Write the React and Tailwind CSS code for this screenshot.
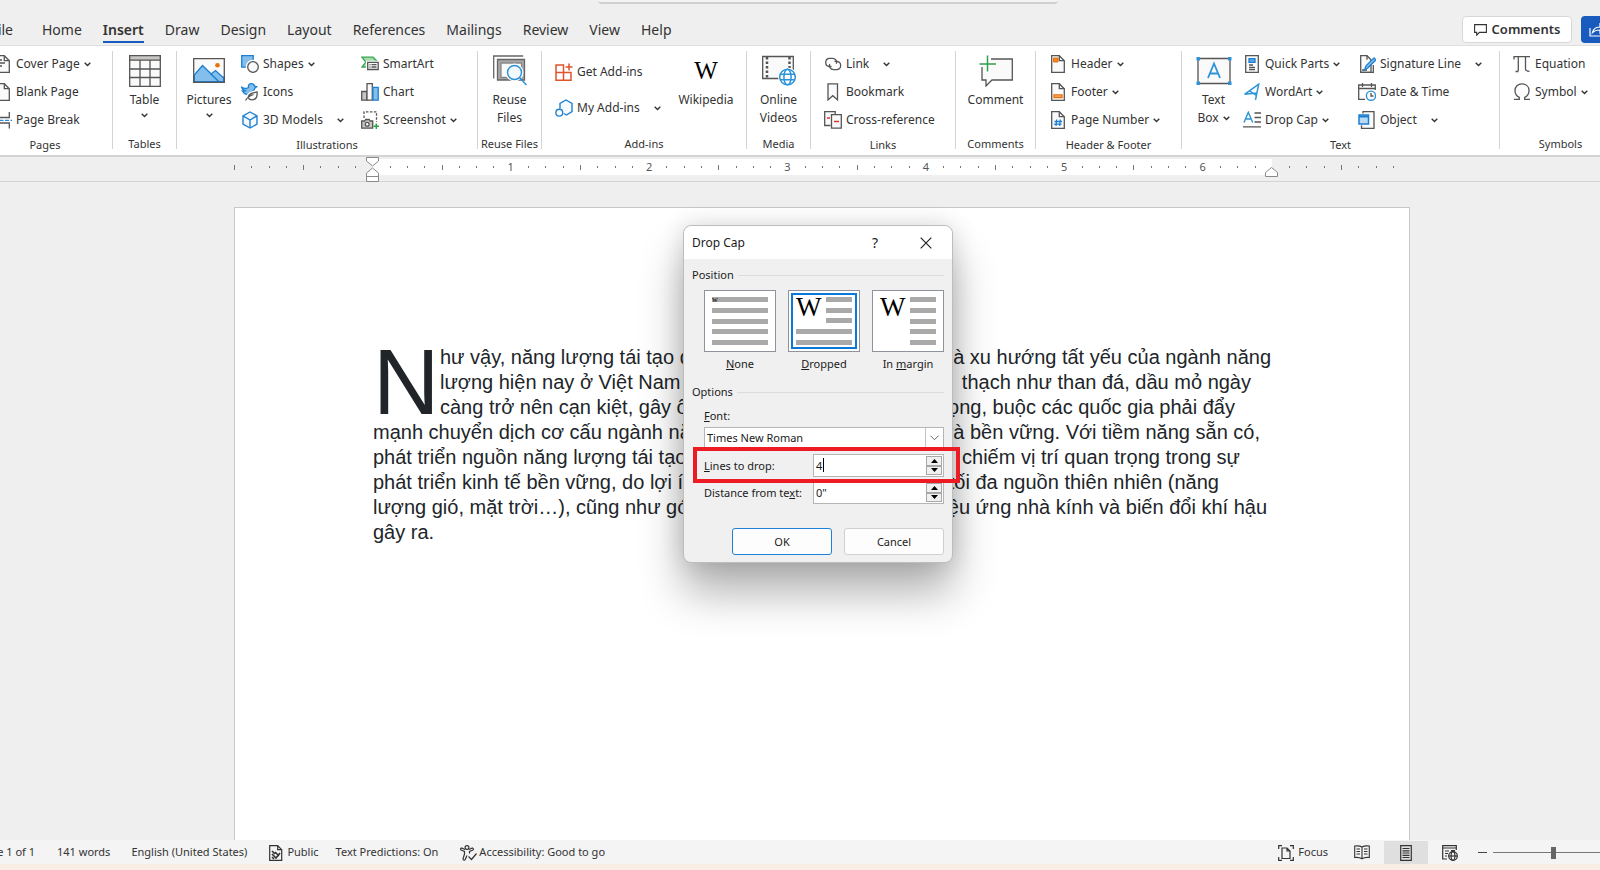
import React, { useState } from "react";

const tabs = [
  "Home",
  "Insert",
  "Draw",
  "Design",
  "Layout",
  "References",
  "Mailings",
  "Review",
  "View",
  "Help",
];

// Document lines: the middle of each one lies under the dialog
const lines = [
  { left: "hư vậy, năng lượng tái tạo đ", right: "là xu hướng tất yếu của ngành năng", width: 831 },
  { left: "lượng hiện nay ở Việt Nam", right: "thạch như than đá, dầu mỏ ngày", width: 811 },
  { left: "càng trở nên cạn kiệt, gây ô", right: "rọng, buộc các quốc gia phải đẩy", width: 795 },
  { left: "mạnh chuyển dịch cơ cấu ngành nă", right: "và bền vững. Với tiềm năng sẵn có,", width: 887 },
  { left: "phát triển nguồn năng lượng tái tạo", right: "chiếm vị trí quan trọng trong sự", width: 867 },
  { left: "phát triển kinh tế bền vững, do lợi íc", right: "tối đa nguồn thiên nhiên (năng", width: 846 },
  { left: "lượng gió, mặt trời…), cũng như gó", right: "iệu ứng nhà kính và biến đổi khí hậu", width: 894 },
  { left: "gây ra.", right: "", width: 894 },
];

const Chevron = ({ className = "" }) => (
  <svg className={"h-[5px] w-[7px] shrink-0 " + className} viewBox="0 0 7 5" fill="none" stroke="#333" strokeWidth="1.400">
    <path d="M0.700 0.800 3.500 3.600 6.300 0.800" />
  </svg>
);

const Icon = ({ children }) => (
  <svg className="size-[18px] shrink-0" viewBox="0 0 18 18" fill="none" stroke="#555" strokeWidth="1.300">
    {children}
  </svg>
);

const PageShape = () => (
  <>
    <path d="M2.700 0.700h7.600l5 5v11.600H2.700z" fill="#fafafa" />
    <path d="M10.300 0.700v5h5" />
  </>
);

const icons = {
  cover: (
    <Icon>
      <PageShape />
      <path d="M4 5h4M4 8h7M4 11h4" />
    </Icon>
  ),
  blank: (
    <Icon>
      <PageShape />
    </Icon>
  ),
  pageBreak: (
    <Icon>
      <path d="M2 6.500h13.300V1M2 12h13.300v5.500" />
      <path d="M0 9.300h18" stroke="#2b88d8" strokeDasharray="4 1.500" />
    </Icon>
  ),
  shapes: (
    <Icon>
      <path d="M0.700 0.700h11.500v11.500H0.700z" fill="#83beec" stroke="#1e7fd0" />
      <circle cx="12" cy="12" r="6.600" fill="#fff" stroke="#fff" />
      <circle cx="12" cy="12" r="5.300" fill="#fafafa" />
    </Icon>
  ),
  icons: (
    <Icon>
      <path
        d="M0.700 4.200c2 1.300 5 1.500 6.800 0.300C7 2 8.500 0.700 10.300 0.700c1.800 0 2.900 1 3.200 2.300l2.200 0.700-2 1.500c-0.300 2.500-2.500 4-5 4.500-2 3-5.500 1.500-7.200-1.500 1 0.300 2 0.200 2.800-0.200C2.300 7.500 1 6 0.700 4.200z"
        fill="#83beec"
        stroke="#1e7fd0"
      />
      <path
        d="M16.300 8.500c0.500 4.500-0.500 8.500-5 8.700-3 0-4.500-1.500-4.300-3.500 0.300-3.500 4-4 9.300-5.200z"
        fill="#fff"
        stroke="#fff"
        strokeWidth="3"
      />
      <path d="M16 8.800c0.500 4.200-0.500 7.900-4.800 8.100-2.500 0-4-1.500-3.800-3.300 0.300-3.200 4-3.600 8.600-4.800zM4.500 17.500c2-3.500 4.500-5 8-6" fill="#fff" />
    </Icon>
  ),
  cube: (
    <Icon>
      <path d="M9 1 16 4.800v8.400L9 17 2 13.200V4.800z" fill="#f4f9fd" stroke="#2180cf" strokeWidth="1.400" />
      <path d="M2 4.800 9 9l7-4.200M9 9v8" stroke="#2180cf" strokeWidth="1.400" />
    </Icon>
  ),
  smartArt: (
    <Icon>
      <path d="M1 2.200h11l4.500 4.500H9V12H1l3.800-4.800z" fill="#a5dcae" stroke="#3ba554" />
      <path d="M5.500 6.500H17.500V15.500H5.500z" fill="#fff" stroke="#fff" />
      <path d="M6.700 7.300h10.500v7.200H6.700z" fill="#fafafa" />
      <path d="M8.500 9.600h1M10.500 9.600h5M8.500 12h1M10.500 12h5" />
    </Icon>
  ),
  chart: (
    <Icon>
      <path d="M0.700 8.500h5.300v8.700H0.700z" fill="#c8c6c4" />
      <path d="M6 0.700h5.300v16.500H6z" fill="#fafafa" />
      <path d="M11.900 4.300h5.300v12.900h-5.300z" fill="#83beec" stroke="#1e7fd0" />
    </Icon>
  ),
  screenshot: (
    <Icon>
      <path d="M3 7V0.900h12.500V11" strokeDasharray="2.500 1.500" />
      <path d="M0.700 10h3l1-1.500h3.500l1 1.500h2.500v7.200H0.700z" fill="#c8c6c4" />
      <circle cx="6.200" cy="13.300" r="1.900" fill="#fff" />
      <path d="M12.500 15.200h5.500M15.300 12.500V18" stroke="#2f9e48" strokeWidth="1.500" />
    </Icon>
  ),
  getAddins: (
    <Icon>
      <path d="M1 2h7.500v7.500H1zM1 9.500h7.500v7.800H1zM8.500 9.500H16v7.800H8.500z" stroke="#e0532b" strokeWidth="1.500" />
      <path d="M14 0.500v7M10.500 4h7" stroke="#e0532b" strokeWidth="1.500" />
    </Icon>
  ),
  myAddins: (
    <Icon>
      <path d="M5 9.500V4.500L11 1l6 3.500v8L11.500 16 8.700 14.500" fill="#f7fafd" stroke="#2180cf" strokeWidth="1.400" />
      <circle cx="4.300" cy="13.700" r="3.400" fill="#fff" stroke="#2180cf" strokeWidth="1.400" />
    </Icon>
  ),
  link: (
    <Icon>
      <path d="M7.500 11.500H5A4.200 4.200 0 0 1 5 3.300h3.500a4.100 4.100 0 0 1 3.900 5.400" />
      <path d="M10.500 6.300h2.600a4.200 4.200 0 0 1 0 8.300H9.600a4.100 4.100 0 0 1-3.900-5.600" />
    </Icon>
  ),
  bookmark: (
    <Icon>
      <path d="M4 0.900h9.500v16l-4.700-4.200L4 16.900z" fill="#fafafa" />
    </Icon>
  ),
  crossRef: (
    <Icon>
      <path d="M6.500 14.500H0.700V0.700h10.500V3" fill="#fafafa" />
      <path d="M7.500 3.700h9.800v13.500H7.500z" fill="#fafafa" />
      <path d="M3 7h3M10 10.500h5" stroke="#e0342b" />
    </Icon>
  ),
  header: (
    <Icon>
      <PageShape />
      <path d="M4.500 3h4.500v4H4.500z" fill="#f28a1e" stroke="#e8710a" strokeWidth="1" />
    </Icon>
  ),
  footer: (
    <Icon>
      <PageShape />
      <path d="M5 11.800h8v2.700H5z" fill="#fbb86c" stroke="#e8710a" />
    </Icon>
  ),
  pageNumber: (
    <Icon>
      <PageShape />
      <path d="M7.700 8.500 7 15M11.300 8.500l-0.700 6.500M5.500 10.500h7.500M5 13.200h7.500" stroke="#1e7fd0" />
    </Icon>
  ),
  quickParts: (
    <Icon>
      <path d="M2.700 0.700h12.600v16.600H2.700z" fill="#fafafa" />
      <path d="M6 3.700h6v3.600H6z" fill="#5aa9e6" stroke="#1e7fd0" />
      <path d="M6 10h4M6 12.300h6M6 14.500h6" />
    </Icon>
  ),
  wordArt: (
    <Icon>
      <path d="M1.500 11.300 15.700 1.200 12.500 16.800M1.500 11.300l12.300-1.200M6.500 7.800l6.800 4.700" stroke="#2b93d8" strokeWidth="1.500" />
    </Icon>
  ),
  dropCap: (
    <Icon>
      <path d="M1 11.500 5.300 1.300 9.700 11.500M2.500 8h5.700" stroke="#2b93d8" strokeWidth="1.400" />
      <path d="M11.500 2H18M11.500 6.500H18M11.500 11H18M0 15.800h18" />
    </Icon>
  ),
  signature: (
    <Icon>
      <path d="M2.700 0.700H9l4 4v12.600H2.700z" fill="#fafafa" />
      <path d="M9 0.700v4M4 15h5M15.300 10v7.300H2.700" />
      <path d="M6.500 15l1.500-4.200 8-8 2 2-8 8z" fill="#83beec" stroke="#1e7fd0" />
    </Icon>
  ),
  dateTime: (
    <Icon>
      <path d="M7 16.300H0.700V2h16.600v5M0.700 5.500h16.600M4.500 0v4M13.500 0v4" />
      <circle cx="13" cy="12.700" r="4.600" fill="#fff" stroke="#2b93d8" strokeWidth="1.400" />
      <path d="M13 10v3h2.500" />
    </Icon>
  ),
  object: (
    <Icon>
      <path d="M5 2.500V0.700h11v16.600H3.500v-3" fill="#fafafa" />
      <path d="M1 4h9.500v9H1z" fill="#b8daf5" stroke="#1e7fd0" strokeWidth="1.500" />
      <path d="M1 5.500h9.500" stroke="#1e7fd0" strokeWidth="2" />
    </Icon>
  ),
  pi: (
    <Icon>
      <path d="M1 4.500V1.600h16M5.300 1.600v14.500M2.500 16.500h3M12.500 1.600v12.200c0 2 1.500 2.500 4 2.500" />
    </Icon>
  ),
  omega: (
    <Icon>
      <path d="M1 16.400h5.300v-2C3.500 13 2 10.500 2 7.500 2 3.500 5 0.900 9 0.900s7 2.600 7 6.600c0 3-1.500 5.500-4.300 6.900v2H17" />
    </Icon>
  ),
};

const Item = ({ icon, label, arrow, split }) => (
  <button className="flex items-center whitespace-nowrap text-left">
    {icons[icon]}
    <span className="ml-1">{label}</span>
    {arrow && <Chevron className="ml-1" />}
    {split && <Chevron className="ml-3.5" />}
  </button>
);

const Column = ({ className = "", children }) => (
  <div className={"grid auto-rows-[28px] content-start " + className}>{children}</div>
);

const BigButton = ({ className = "", icon, children }) => (
  <button className={"flex flex-col items-center leading-[18px] " + className}>
    <span className="flex h-[41px] items-center">{icon}</span>
    {children}
  </button>
);

const Group = ({ title, className = "", children }) => (
  <section className={"flex shrink-0 " + className}>
    <div className="flex min-w-0 flex-1 flex-col pt-1">
      <div className="flex h-[84px]">{children}</div>
      <h2 className="text-center text-[11px] leading-[22px]">{title}</h2>
    </div>
    <div className="mt-[5px] h-[98px] w-px bg-[#d4d4d4]" />
  </section>
);

const TableIcon = () => (
  <svg width="32" height="32" viewBox="0 0 32 32" fill="#fafafa" stroke="#555" strokeWidth="1.300">
    <path d="M0.700 0.700h30.600v30.600H0.700z" />
    <path d="M0.700 0.700h30.600v4.500H0.700z" fill="#c8c6c4" />
    <path d="M0.700 14h30.600M0.700 22.500h30.600M11 5v26M21 5v26" />
  </svg>
);

const PictureIcon = () => (
  <svg width="32" height="25" viewBox="0 0 32 25" fill="#fafafa" strokeWidth="1.300">
    <path d="M0.700 0.700h30.600v23.600H0.700z" stroke="#555" />
    <path d="M1.300 17 9.500 7.500 26 23.700H1.300z" fill="#83beec" stroke="#1e7fd0" />
    <path d="M18 16l4.500-3.500 8.200 7.500v3.700H26z" fill="#83beec" stroke="#1e7fd0" />
    <path d="M0.700 17v7.300h30.600V18" fill="none" stroke="#555" />
    <circle cx="24.500" cy="7.200" r="2.300" fill="#e8710a" />
  </svg>
);

const ReuseIcon = () => (
  <svg width="34" height="31" viewBox="0 0 34 31" fill="none" stroke="#666" strokeWidth="1.300">
    <path d="M0.700 23.500V1h29.500" />
    <path d="M4.500 25V4.500h27v20.500z" fill="#a8a8a8" />
    <path d="M8 8h20.500v14.500H8z" fill="#fafafa" stroke="#888" />
    <circle cx="21.500" cy="17.500" r="8.300" fill="#fff" stroke="#fff" />
    <circle cx="21.500" cy="17.500" r="7" fill="#f4f9fd" stroke="#2b93d8" strokeWidth="1.500" />
    <path d="M26.500 22.500l7 7.500" stroke="#2b93d8" strokeWidth="1.500" />
  </svg>
);

const VideoIcon = () => (
  <svg width="34" height="31" viewBox="0 0 34 31" fill="none" stroke="#555" strokeWidth="1.300">
    <path d="M0.700 1.500h30.600v22H0.700z" fill="#fafafa" />
    <path d="M5 2v21M27.500 2v21" strokeWidth="2.500" strokeDasharray="2.500 2" />
    <circle cx="25.500" cy="22" r="9.500" fill="#fff" stroke="none" />
    <g stroke="#2b93d8" strokeWidth="1.500">
      <circle cx="25.500" cy="22" r="7.800" />
      <ellipse cx="25.500" cy="22" rx="3.600" ry="7.800" />
      <path d="M18.300 19.300h14.400M18.300 24.700h14.400" />
    </g>
  </svg>
);

const CommentIcon = () => (
  <svg width="34" height="32" viewBox="0 0 34 32" fill="none" stroke="#555" strokeWidth="1.300">
    <path d="M3 12v13h4v6l6-6h20.300V4H12" fill="#fafafa" />
    <path d="M8.500 0.500v16M0.500 9h16.500" stroke="#fff" strokeWidth="4" />
    <path d="M8.500 0.500v16M0.500 9h16.500" stroke="#2f9e48" strokeWidth="1.500" />
  </svg>
);

const TextBoxIcon = () => (
  <svg width="36" height="30" viewBox="0 0 36 30" fill="none" stroke="#555" strokeWidth="1.300">
    <path d="M2 2.500h32v25H2z" fill="#fafafa" />
    <path d="M12 22 18 7.500 24 22M14 17.500h8" stroke="#2b93d8" strokeWidth="1.800" />
    <path d="M0.500 1h3.500v3.500H0.500zM32 1h3.500v3.500H32zM0.500 25.500h3.500V29H0.500zM32 25.500h3.500V29H32z" fill="#2b93d8" stroke="none" />
  </svg>
);

const Ribbon = () => (
  <div className="flex h-[110px] overflow-hidden border-t border-[#dfdfdf] bg-white text-[12px] shadow-[0_2px_0_#d2d4d3]">
    <Group title="Pages" className="-ml-[22px] w-[135px]">
      <Column className="pl-4">
        <Item icon="cover" label="Cover Page" arrow />
        <Item icon="blank" label="Blank Page" />
        <Item icon="pageBreak" label="Page Break" />
      </Column>
    </Group>
    <Group title="Tables" className="w-[64px]">
      <BigButton className="w-full" icon={<TableIcon />}>
        <span>Table</span>
        <Chevron className="mt-1" />
      </BigButton>
    </Group>
    <Group title="Illustrations" className="w-[301px]">
      <BigButton className="w-[64px]" icon={<PictureIcon />}>
        <span>Pictures</span>
        <Chevron className="mt-1" />
      </BigButton>
      <Column className="w-[120px]">
        <Item icon="shapes" label="Shapes" arrow />
        <Item icon="icons" label="Icons" />
        <Item icon="cube" label="3D Models" split />
      </Column>
      <Column>
        <Item icon="smartArt" label="SmartArt" />
        <Item icon="chart" label="Chart" />
        <Item icon="screenshot" label="Screenshot" arrow />
      </Column>
    </Group>
    <Group title="Reuse Files" className="w-[64px] whitespace-nowrap">
      <BigButton className="w-full" icon={<ReuseIcon />}>
        <span>Reuse</span>
        <span>Files</span>
      </BigButton>
    </Group>
    <Group title="Add-ins" className="w-[205px]">
      <div className="grid w-[133px] auto-rows-[36px] content-start pt-1 pl-[13px]">
        <Item icon="getAddins" label="Get Add-ins" />
        <Item icon="myAddins" label="My Add-ins" split />
      </div>
      <BigButton
        className="w-[62px]"
        icon={<span className="font-['Liberation_Serif',serif] text-[25px] text-black">W</span>}
      >
        <span>Wikipedia</span>
      </BigButton>
    </Group>
    <Group title="Media" className="w-[64px]">
      <BigButton className="w-full" icon={<VideoIcon />}>
        <span>Online</span>
        <span>Videos</span>
      </BigButton>
    </Group>
    <Group title="Links" className="w-[145px]">
      <Column className="pl-[13px]">
        <Item icon="link" label="Link" split />
        <Item icon="bookmark" label="Bookmark" />
        <Item icon="crossRef" label="Cross-reference" />
      </Column>
    </Group>
    <Group title="Comments" className="w-[80px]">
      <BigButton className="w-full" icon={<CommentIcon />}>
        <span>Comment</span>
      </BigButton>
    </Group>
    <Group title="Header & Footer" className="w-[146px]">
      <Column className="pl-[13px]">
        <Item icon="header" label="Header" arrow />
        <Item icon="footer" label="Footer" arrow />
        <Item icon="pageNumber" label="Page Number" arrow />
      </Column>
    </Group>
    <Group title="Text" className="w-[318px]">
      <BigButton className="w-[61px] pl-0.5" icon={<TextBoxIcon />}>
        <span>Text</span>
        <span className="flex items-center">
          Box <Chevron className="ml-1" />
        </span>
      </BigButton>
      <Column className="w-[115px]">
        <Item icon="quickParts" label="Quick Parts" arrow />
        <Item icon="wordArt" label="WordArt" arrow />
        <Item icon="dropCap" label="Drop Cap" arrow />
      </Column>
      <Column>
        <Item icon="signature" label="Signature Line" split />
        <Item icon="dateTime" label="Date & Time" />
        <Item icon="object" label="Object" split />
      </Column>
    </Group>
    <Group title="Symbols" className="w-[122px]">
      <Column className="pl-[13px]">
        <Item icon="pi" label="Equation" />
        <Item icon="omega" label="Symbol" arrow />
      </Column>
    </Group>
  </div>
);

const Ruler = () => {
  // One cell for each eighth of an inch, the text area runs from 0 to 6.5"
  const cells = Array.from({ length: 68 }, (_, i) => i - 8);
  return (
    <div className="h-[27px] border-b border-[#d2d4d3] pt-1 pl-[234px]">
      <div className="relative flex h-4 w-[1176px] text-[11px] text-[#555]">
        {cells.map((n) => (
          <div
            key={n}
            className={"flex flex-1 items-center " + (n >= 0 && n < 52 ? "bg-white" : "")}
          >
            {n > 0 && n < 52 && n % 8 === 0 ? (
              <span className="flex w-0 justify-center">{n / 8}</span>
            ) : n === 0 || n === 52 ? null : (
              <span className={"w-px bg-[#777] " + (n % 4 === 0 ? "h-[5px]" : "h-[2px]")} />
            )}
          </div>
        ))}
        <svg className="absolute -top-0.5 left-[132px]" width="14" height="26" viewBox="0 0 14 26" fill="#fff" stroke="#8a8a8a">
          <path d="M0.500 0.500h12v3.500L6.500 9 0.500 4z" />
          <path d="M0.500 24.500V16l6-5 6 5v8.500zM0.500 19.500h12" />
        </svg>
        <svg className="absolute top-2 left-[1031px]" width="14" height="10" viewBox="0 0 14 10" fill="#fff" stroke="#8a8a8a">
          <path d="M0.500 9.500V5.500l6-5 6 5v4z" />
        </svg>
      </div>
    </div>
  );
};

const Bars = ({ count = 5, className = "" }) => (
  <span className={"flex flex-1 flex-col justify-between " + className}>
    {Array.from({ length: count }, (_, b) => (
      <span key={b} className="h-[5px] bg-[#a9a9a9]" />
    ))}
  </span>
);

const PositionOption = ({ id, label, checked, onChange, children }) => (
  <label className="flex flex-col items-center gap-1">
    <input type="radio" name="position" value={id} checked={checked} onChange={onChange} className="sr-only" />
    <span className="flex h-[62px] w-[72px] border border-[#8f939e] bg-white p-[2px]">
      <span className={"flex flex-1 border-2 px-[3px] pt-[2px] " + (checked ? "border-[#0a78d7]" : "border-transparent")}>
        {children}
      </span>
    </span>
    <span className="text-[11px] leading-[16px]">{label}</span>
  </label>
);

const BigW = () => (
  <span className="-mt-[3px] h-[26px] w-[30px] font-['Liberation_Serif',serif] text-[27px] leading-[26px] text-black">W</span>
);

const SectionTitle = ({ children }) => (
  <h3 className="flex items-center gap-1 text-[11px] leading-[16px]">
    {children}
    <span className="h-px flex-1 bg-[#dcdcdc]" />
  </h3>
);

const Spinner = ({ id, value, onChange, caret }) => (
  <div className="relative flex h-[23px] w-[131px] border border-[#b5b5b5] bg-white">
    <input
      id={id}
      type="text"
      className="min-w-0 flex-1 px-[2px] text-[11px] outline-none"
      value={value}
      onChange={(e) => onChange(e.target.value)}
    />
    {caret && <span className="absolute top-[3px] left-[9px] h-[14px] w-px bg-black" />}
    <div className="flex w-[18px] flex-col p-px">
      <button aria-label="Increase" className="flex flex-1 items-center justify-center border border-[#a8a8a8] bg-[#f0f0f0]">
        <svg width="7" height="4" viewBox="0 0 7 4">
          <path d="M0 4 3.500 0 7 4z" />
        </svg>
      </button>
      <button aria-label="Decrease" className="flex flex-1 items-center justify-center border border-[#a8a8a8] bg-[#f0f0f0]">
        <svg width="7" height="4" viewBox="0 0 7 4">
          <path d="M0 0 3.500 4 7 0z" />
        </svg>
      </button>
    </div>
  </div>
);

const DropCapDialog = () => {
  const [position, setPosition] = useState("dropped");
  const [font, setFont] = useState("Times New Roman");
  const [count, setCount] = useState("4");
  const [distance, setDistance] = useState('0"');

  return (
    <div
      role="dialog"
      aria-label="Drop Cap"
      className="absolute top-[225px] left-[683px] w-[270px] rounded-lg border border-[#bdbdbd] bg-[#f0f0f0] text-[11px] leading-[16px] text-[#1b1b1b] shadow-[0_30px_44px_0_rgba(0,0,0,0.3),0_0_24px_rgba(0,0,0,0.14)]"
    >
      <div className="flex h-[33px] items-center rounded-t-lg bg-white pl-2 text-[12px]">
        <span className="flex-1">Drop Cap</span>
        <button className="w-[50px] text-center text-[14px]">?</button>
        <button aria-label="Close" className="flex w-[52px] justify-center">
          <svg width="12" height="12" viewBox="0 0 12 12" fill="none" stroke="#222" strokeWidth="1.200">
            <path d="M0.700 0.700l10.600 10.600M11.300 0.700 0.700 11.300" />
          </svg>
        </button>
      </div>

      <div className="px-2 pt-2 pb-[7px]">
        <SectionTitle>Position</SectionTitle>
        <div className="mt-[7px] flex justify-between pl-3">
          <PositionOption
            id="none"
            checked={position === "none"}
            onChange={() => setPosition("none")}
            label={<><u>N</u>one</>}
          >
            <span className="relative w-0 font-['Liberation_Serif',serif] text-[8px] leading-[5px] text-black">w</span>
            <Bars className="h-12" />
          </PositionOption>
          <PositionOption
            id="dropped"
            checked={position === "dropped"}
            onChange={() => setPosition("dropped")}
            label={<><u>D</u>ropped</>}
          >
            <span className="flex flex-1 flex-col gap-[6px]">
              <span className="flex h-[26px]">
                <BigW />
                <Bars count={3} />
              </span>
              <span className="h-[5px] bg-[#a9a9a9]" />
              <span className="h-[5px] bg-[#a9a9a9]" />
            </span>
          </PositionOption>
          <PositionOption
            id="margin"
            checked={position === "margin"}
            onChange={() => setPosition("margin")}
            label={<>In <u>m</u>argin</>}
          >
            <BigW />
            <Bars className="h-12" />
          </PositionOption>
        </div>

        <div className="mt-3">
          <SectionTitle>Options</SectionTitle>
        </div>
        <div className="pl-3">
          <label htmlFor="font" className="mt-2 block">
            <u>F</u>ont:
          </label>
          <div className="relative mt-[3px]">
            <select
              id="font"
              value={font}
              onChange={(e) => setFont(e.target.value)}
              className="block h-[22px] w-full appearance-none border border-[#b5b5b5] bg-white pl-[2px] outline-none"
            >
              <option>Times New Roman</option>
              <option>Arial</option>
            </select>
            <span className="pointer-events-none absolute inset-y-px right-px flex w-[18px] items-center justify-center border-l border-[#c4c4c4]">
              <svg width="9" height="6" viewBox="0 0 9 6" fill="none" stroke="#666">
                <path d="M0.500 0.700 4.500 4.700 8.500 0.700" />
              </svg>
            </span>
          </div>
          <div className="mt-[5px] flex items-center justify-between">
            <label htmlFor="lines">
              <u>L</u>ines to drop:
            </label>
            <Spinner id="lines" value={count} onChange={setCount} caret />
          </div>
          <div className="mt-1 flex items-center justify-between">
            <label htmlFor="distance">
              Distance from te<u>x</u>t:
            </label>
            <Spinner id="distance" value={distance} onChange={setDistance} />
          </div>
        </div>

        <div className="mt-6 flex justify-end gap-3">
          <button className="h-[27px] w-[100px] rounded-[3px] border border-[#1a82d8] bg-[#fdfdfd]">OK</button>
          <button className="h-[27px] w-[100px] rounded-[3px] border border-[#d0d0d0] bg-[#fdfdfd]">Cancel</button>
        </div>
      </div>

      {/* Callout around the "Lines to drop" row */}
      <div className="pointer-events-none absolute top-[221px] left-[9px] h-[36px] w-[267px] border-4 border-[#ed1c24]" />
    </div>
  );
};

const StatusBar = () => (
  <footer className="flex h-6 items-center bg-[#f4f4f4] pt-px text-[11px] whitespace-nowrap text-[#333]">
    <span className="flex w-[35px] justify-end">Page 1 of 1</span>
    <span className="ml-[22px]">141 words</span>
    <span className="ml-[21px]">English (United States)</span>
    <button className="ml-[22px] flex items-center gap-1">
      <svg width="14" height="16" viewBox="0 0 14 16" fill="none" stroke="#333" strokeWidth="1.200">
        <path d="M0.700 0.700h8l4 4v10.600h-12zM8.700 0.700v4h4" />
        <path d="M3 9l4 4 4-5M3 6l3 3M6 7l4 4M3 12l2 2" strokeWidth="1.600" />
      </svg>
      Public
    </button>
    <span className="ml-[17px]">Text Predictions: On</span>
    <button className="ml-[22px] flex items-center gap-0.5">
      <svg width="17" height="16" viewBox="0 0 17 16" fill="none" stroke="#333" strokeWidth="1.200">
        <circle cx="7" cy="2.500" r="1.900" />
        <path d="M5 4.500 1.500 3C0 3.500 0.500 5 1.500 5.300L4.500 6.500V9L3 14c0.300 1.500 1.800 1.300 2.200 0.500L7 10.500M9 4.500 12.500 3c1.500 0.500 1 2 0 2.300L9.500 6.500V8.500" />
        <path d="M8.500 11.500l3 3 5-6" />
      </svg>
      Accessibility: Good to go
    </button>

    <button className="ml-auto flex items-center gap-1">
      <svg width="16" height="16" viewBox="0 0 16 16" fill="none" stroke="#333" strokeWidth="1.200">
        <path d="M0.700 4V0.700H4M12 0.700h3.300V4M0.700 12v3.300H4M12 15.300h3.300V12" />
        <path d="M4 3h5l3 3v7.500H4zM9 3v3h3" />
      </svg>
      Focus
    </button>
    <button aria-label="Read Mode" className="ml-3 flex h-6 w-[44px] items-center justify-center">
      <svg width="16" height="15" viewBox="0 0 16 15" fill="none" stroke="#333" strokeWidth="1.100">
        <path d="M8 2C6 0.700 3 0.700 0.700 1v11.500c2.300-0.300 5.300 0 7.300 1.300 2-1.300 5-1.600 7.300-1.300V1C13 0.700 10 0.700 8 2zM8 2v12" />
        <path d="M2.500 4h3.500M2.500 6.500h3.500M2.500 9h3.500M10 4h3.500M10 6.500h3.500M10 9h3.500" />
      </svg>
    </button>
    <button aria-label="Print Layout" className="flex h-6 w-[44px] items-center justify-center bg-[#dfdfdf]">
      <svg width="12" height="16" viewBox="0 0 12 16" fill="none" stroke="#333" strokeWidth="1.200">
        <path d="M0.700 0.700h10.600v14.600H0.700zM2.500 3.500h7M2.500 5.800h7M2.500 8h7M2.500 10.300h7M2.500 12.500h7" />
      </svg>
    </button>
    <button aria-label="Web Layout" className="flex h-6 w-[44px] items-center justify-center">
      <svg width="16" height="16" viewBox="0 0 16 16" fill="none" stroke="#333" strokeWidth="1.200">
        <path d="M5 14H0.700V0.700h13.600V5M0.700 3h13.600M3 6h4M3 8.500h3M3 11h2M9 5.500h4" />
        <circle cx="11" cy="11" r="4.300" />
        <ellipse cx="11" cy="11" rx="1.900" ry="4.300" />
        <path d="M6.700 11h8.600" />
      </svg>
    </button>
    <button aria-label="Zoom out" className="flex w-[21px] justify-center">
      <span className="h-px w-[9px] bg-[#444]" />
    </button>
    <input
      type="range"
      aria-label="Zoom"
      defaultValue="50"
      className="-mr-[13px] h-3 w-[120px] appearance-none bg-[linear-gradient(#777,#777)] bg-[length:100%_1px] bg-center bg-no-repeat [&::-webkit-slider-thumb]:h-3 [&::-webkit-slider-thumb]:w-[5px] [&::-webkit-slider-thumb]:appearance-none [&::-webkit-slider-thumb]:bg-[#666]"
    />
  </footer>
);

export default function App() {
  return (
    <div className="relative flex h-screen flex-col overflow-hidden bg-[#efefef] font-['Noto_Sans',sans-serif] text-[#333]">
      <header className="relative flex h-[45px] shrink-0 items-end">
        <div className="absolute -top-2 left-[598px] h-3 w-[460px] rounded border-b-2 border-[#cfcfcf] bg-[#f4f4f4]" />
        <nav className="flex h-8 gap-[21px] text-[14px] leading-[34px] whitespace-nowrap">
          <a href="#file" className="flex w-[21px] justify-end pr-2">
            File
          </a>
          {tabs.map((tab) => (
            <a
              key={tab}
              href={"#" + tab.toLowerCase()}
              className={tab === "Insert" ? "h-[30px] border-b-2 border-[#185abd] font-semibold" : ""}
            >
              {tab}
            </a>
          ))}
        </nav>
        <div className="-mr-[41px] mb-[2px] ml-auto flex gap-[9px]">
          <button className="flex h-[27px] w-[110px] items-center justify-center gap-[5px] rounded border border-[#d8d8d8] bg-white text-[13px] font-semibold">
            <svg width="13" height="12" viewBox="0 0 13 12" fill="none" stroke="#333" strokeWidth="1.100">
              <path d="M0.600 0.600h11.800v7.800H5.500L2.700 11.200V8.400H0.600z" />
            </svg>
            Comments
          </button>
          <button aria-label="Share" className="flex h-[27px] w-[60px] items-center rounded bg-[#185abd] pl-2">
            <svg width="18" height="14" viewBox="0 0 18 14" fill="none" stroke="#fff" strokeWidth="1.200">
              <path d="M1 5v8h14v-3M3.500 9.500C4.500 5.500 7 4 11 4V1l5 4.500-5 4.500V7C8 7 5.500 7.500 3.500 9.500z" />
            </svg>
          </button>
        </div>
      </header>

      <Ribbon />
      <Ruler />

      <main className="min-h-0 flex-1 overflow-hidden pt-[25px] pl-[234px]">
        <article className="h-full w-[1176px] border border-b-0 border-[#c8c8c8] bg-white px-[138px] pt-[137px] font-['Liberation_Sans',sans-serif] text-[20px] leading-[25px] whitespace-nowrap text-[#212529]">
          <span className="float-left h-[75px] w-[67px] text-[92px] leading-[75px]">N</span>
          {lines.map((line, i) => (
            <p key={i} className="flex justify-between" style={{ width: line.width }}>
              <span>{line.left}</span>
              <span>{line.right}</span>
            </p>
          ))}
        </article>
      </main>

      <StatusBar />
      <div className="h-1.5 shrink-0 bg-[#f8eee3]" />

      <DropCapDialog />
    </div>
  );
}
